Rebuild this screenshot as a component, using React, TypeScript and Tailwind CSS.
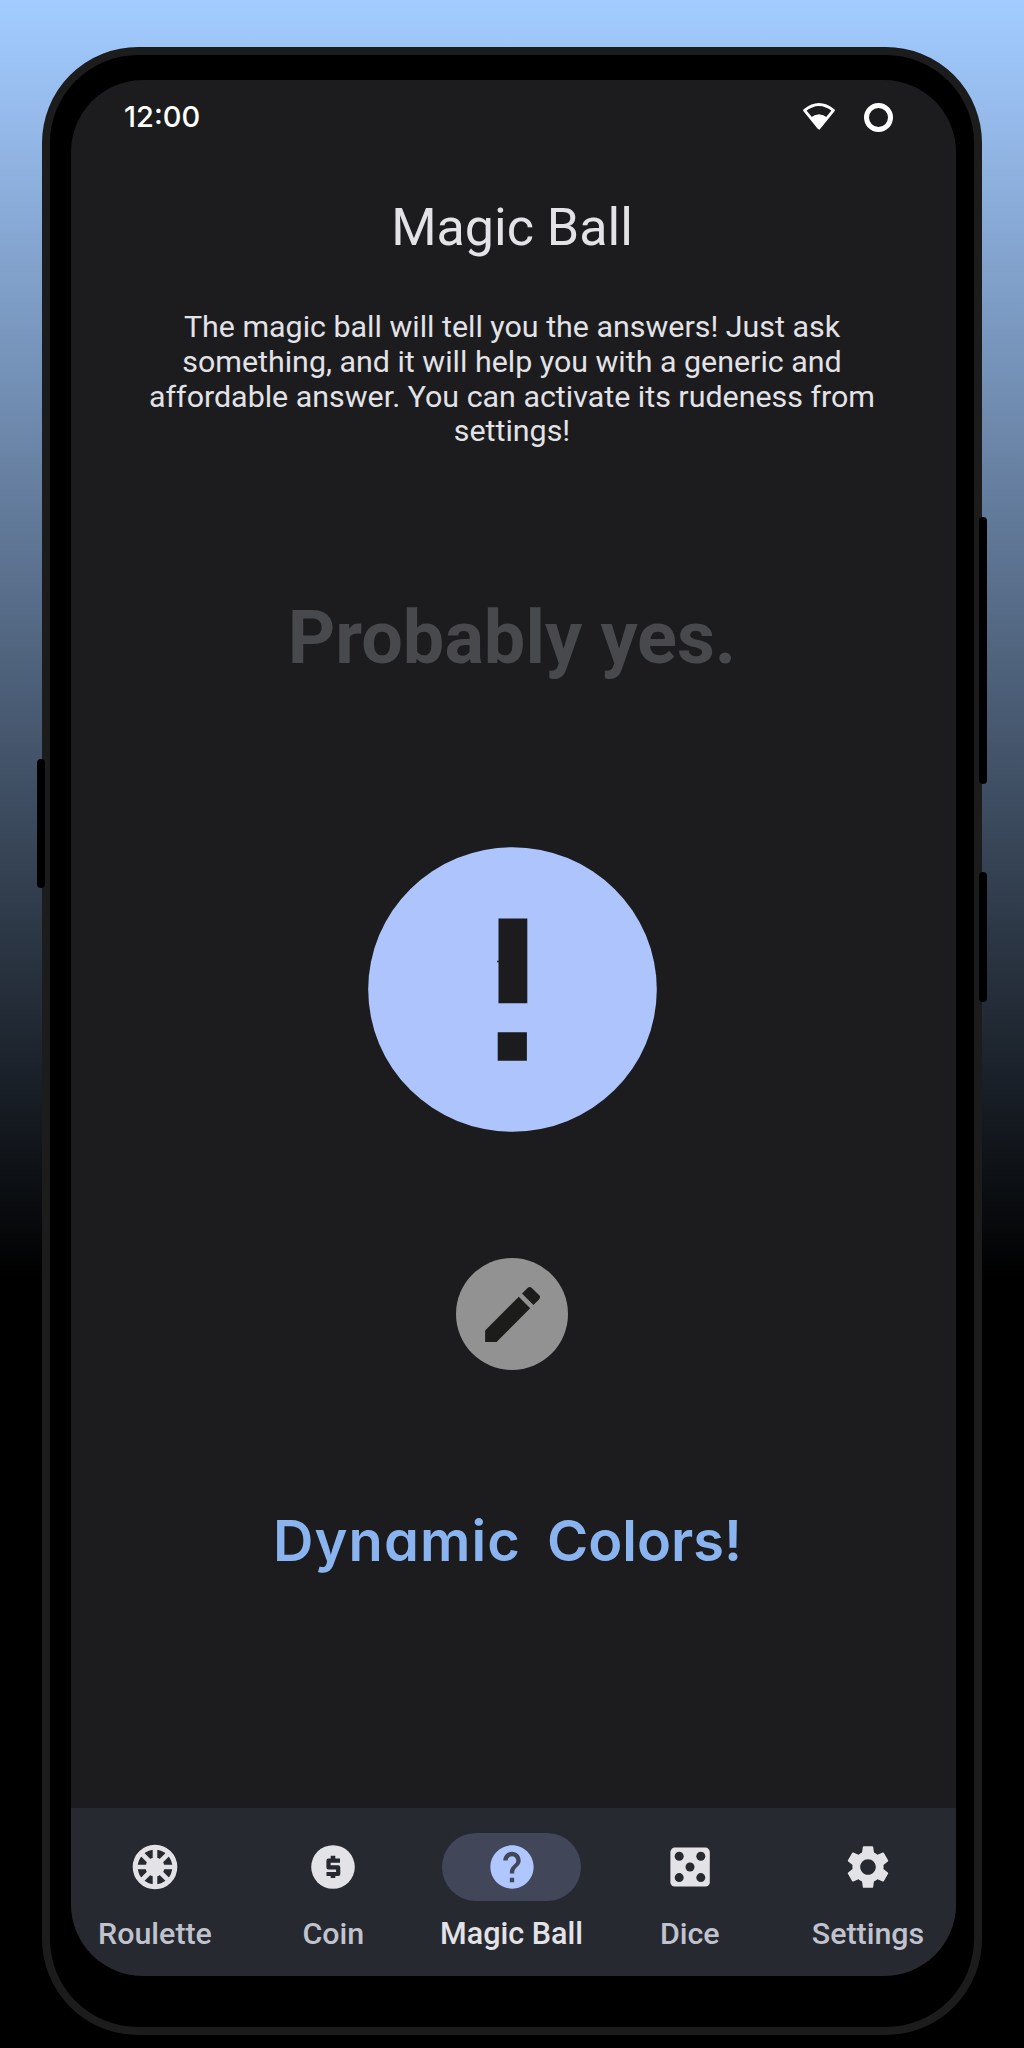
import type { ReactNode } from "react";
import { MdHelp, MdModeEdit, MdSettings } from "react-icons/md";

function WifiIcon() {
  return (
    <svg width="34" height="30" viewBox="0 0 34 30" fill="none">
      <path d="M2.6 8.4 Q17 -3.4 31.4 8.4 L17 26 Z" stroke="#fff" strokeWidth="2.8" strokeLinejoin="round" />
      <path d="M8.4 15.8 Q17 8.6 25.6 15.8 L17 27.6 Z" fill="#fff" />
    </svg>
  );
}

function RouletteIcon() {
  return (
    <svg width="52" height="52" viewBox="0 0 52 52" fill="none" stroke="#e3e2e6">
      <circle cx="26" cy="26" r="19.8" strokeWidth="5" />
      <circle cx="26" cy="26" r="9.5" fill="#e3e2e6" stroke="none" />
      <path d="M26 6V46M6 26H46M12 12L40 40M40 12L12 40" strokeWidth="4.6" />
    </svg>
  );
}

function CoinIcon() {
  return (
    <svg width="52" height="52" viewBox="0 0 52 52" fill="none">
      <circle cx="26" cy="26" r="21.8" fill="#e3e2e6" />
      <path d="M33 19.7H21.5V26.4H31.2V33H19.5" stroke="#272930" strokeWidth="4.2" strokeLinejoin="round" />
      <path d="M26 14.8V19M26 33V37" stroke="#272930" strokeWidth="4.6" />
    </svg>
  );
}

function DiceIcon() {
  const dots = [
    [15.2, 15.2],
    [36.8, 15.2],
    [26, 26],
    [15.2, 36.6],
    [36.8, 36.6],
  ];
  return (
    <svg width="52" height="52" viewBox="0 0 52 52">
      <rect x="6.4" y="6.6" width="39.4" height="39" rx="4.4" fill="#e3e2e6" />
      {dots.map(([x, y]) => (
        <circle key={`${x}-${y}`} cx={x} cy={y} r="4.5" fill="#272930" />
      ))}
    </svg>
  );
}

function NavItem({ icon, label, active }: { icon: ReactNode; label: string; active?: boolean }) {
  return (
    <div className="flex w-[150px] flex-col items-center">
      <div
        className={
          active
            ? "flex h-[68px] w-[139px] items-center justify-center rounded-full bg-[#414659] text-[#afc6ff]"
            : "flex h-[68px] w-[139px] items-center justify-center text-[#e3e2e6]"
        }
      >
        {icon}
      </div>
      <span
        className={
          active
            ? "mt-[15px] whitespace-nowrap text-[30.5px] leading-[36px] font-medium text-[#e3e2e6]"
            : "mt-[15px] whitespace-nowrap text-[30.4px] leading-[36px] font-medium text-[#c0c3cd]"
        }
      >
        {label}
      </span>
    </div>
  );
}

export default function App() {
  return (
    <div className="h-[2048px] w-[1024px] overflow-hidden bg-[linear-gradient(to_bottom,#a2ccff_0px,#9ac0f2_80px,#000_1280px)] px-[42px] pt-[47px] font-['Roboto',sans-serif]">
      <div className="relative h-[1988px] w-[940px] rounded-[96px] border-8 border-[#1c1c1c] bg-black px-[21px] pt-[25px]">
        <div className="absolute top-[704px] -left-[13px] h-[129px] w-[8px] rounded-[4px] bg-black" />
        <div className="absolute top-[462px] -right-[13px] h-[267px] w-[8px] rounded-[4px] bg-black" />
        <div className="absolute top-[817px] -right-[13px] h-[130px] w-[8px] rounded-[4px] bg-black" />

        <div className="flex h-[1896px] w-[885px] flex-col overflow-hidden rounded-[72px] bg-[#1c1c1e]">
          <div className="flex h-[74px] items-center justify-between pr-[63px] pl-[53px]">
            <span className="font-['Inter',sans-serif] text-[29px] font-medium text-white">12:00</span>
            <div className="flex items-center gap-[28px]">
              <WifiIcon />
              <div className="size-[29px] rounded-full border-5 border-white" />
            </div>
          </div>

          <main className="flex flex-col pr-[3px]">
            <h1 className="mt-[44px] text-center text-[52px] leading-[60px] text-[#e3e2e6]">Magic Ball</h1>
            <p className="mt-[52px] text-center text-[30.4px] leading-[34.8px] text-[#e3e2e6]">
              The magic ball will tell you the answers! Just ask
              <br />
              something, and it will help you with a generic and
              <br />
              affordable answer. You can activate its rudeness from
              <br />
              settings!
            </p>
            <p className="mt-[146px] text-center text-[73.8px] leading-[86px] font-bold text-[#48494c]">
              Probably yes.
            </p>

            <svg className="mt-[166px] self-center" width="289" height="285" viewBox="0 0 289 285">
              <ellipse cx="144.5" cy="142.5" rx="144.3" ry="142.3" fill="#adc4fc" />
              <path d="M130.5 71.5h28.8v84.7h-28.8zM129.7 185.2h29.2v28.6h-29.2z" fill="#1c1c1e" />
              <circle cx="130" cy="114.5" r="0.9" fill="#1c1c1e" />
            </svg>

            <div className="mt-[126px] flex size-[112px] items-center justify-center self-center rounded-full bg-[#929292] text-[#1c1c1b]">
              <MdModeEdit size={73} />
            </div>

            <p className="mt-[135px] mr-[9px] flex justify-center gap-[26px] font-['Inter',sans-serif] text-[56px] leading-[72px] font-semibold text-[#8ab4f0] [font-feature-settings:'cv11']">
              <span className="tracking-[1.1px]">Dynamic</span>
              <span>Colors!</span>
            </p>
          </main>

          <div className="mt-auto flex h-[168px] shrink-0 justify-between bg-[#272930] pt-[25px] pr-[13px] pl-[9px]">
            <NavItem icon={<RouletteIcon />} label="Roulette" />
            <NavItem icon={<CoinIcon />} label="Coin" />
            <NavItem icon={<MdHelp size={52} />} label="Magic Ball" active />
            <NavItem icon={<DiceIcon />} label="Dice" />
            <NavItem icon={<MdSettings size={52} />} label="Settings" />
          </div>
        </div>
      </div>
    </div>
  );
}
